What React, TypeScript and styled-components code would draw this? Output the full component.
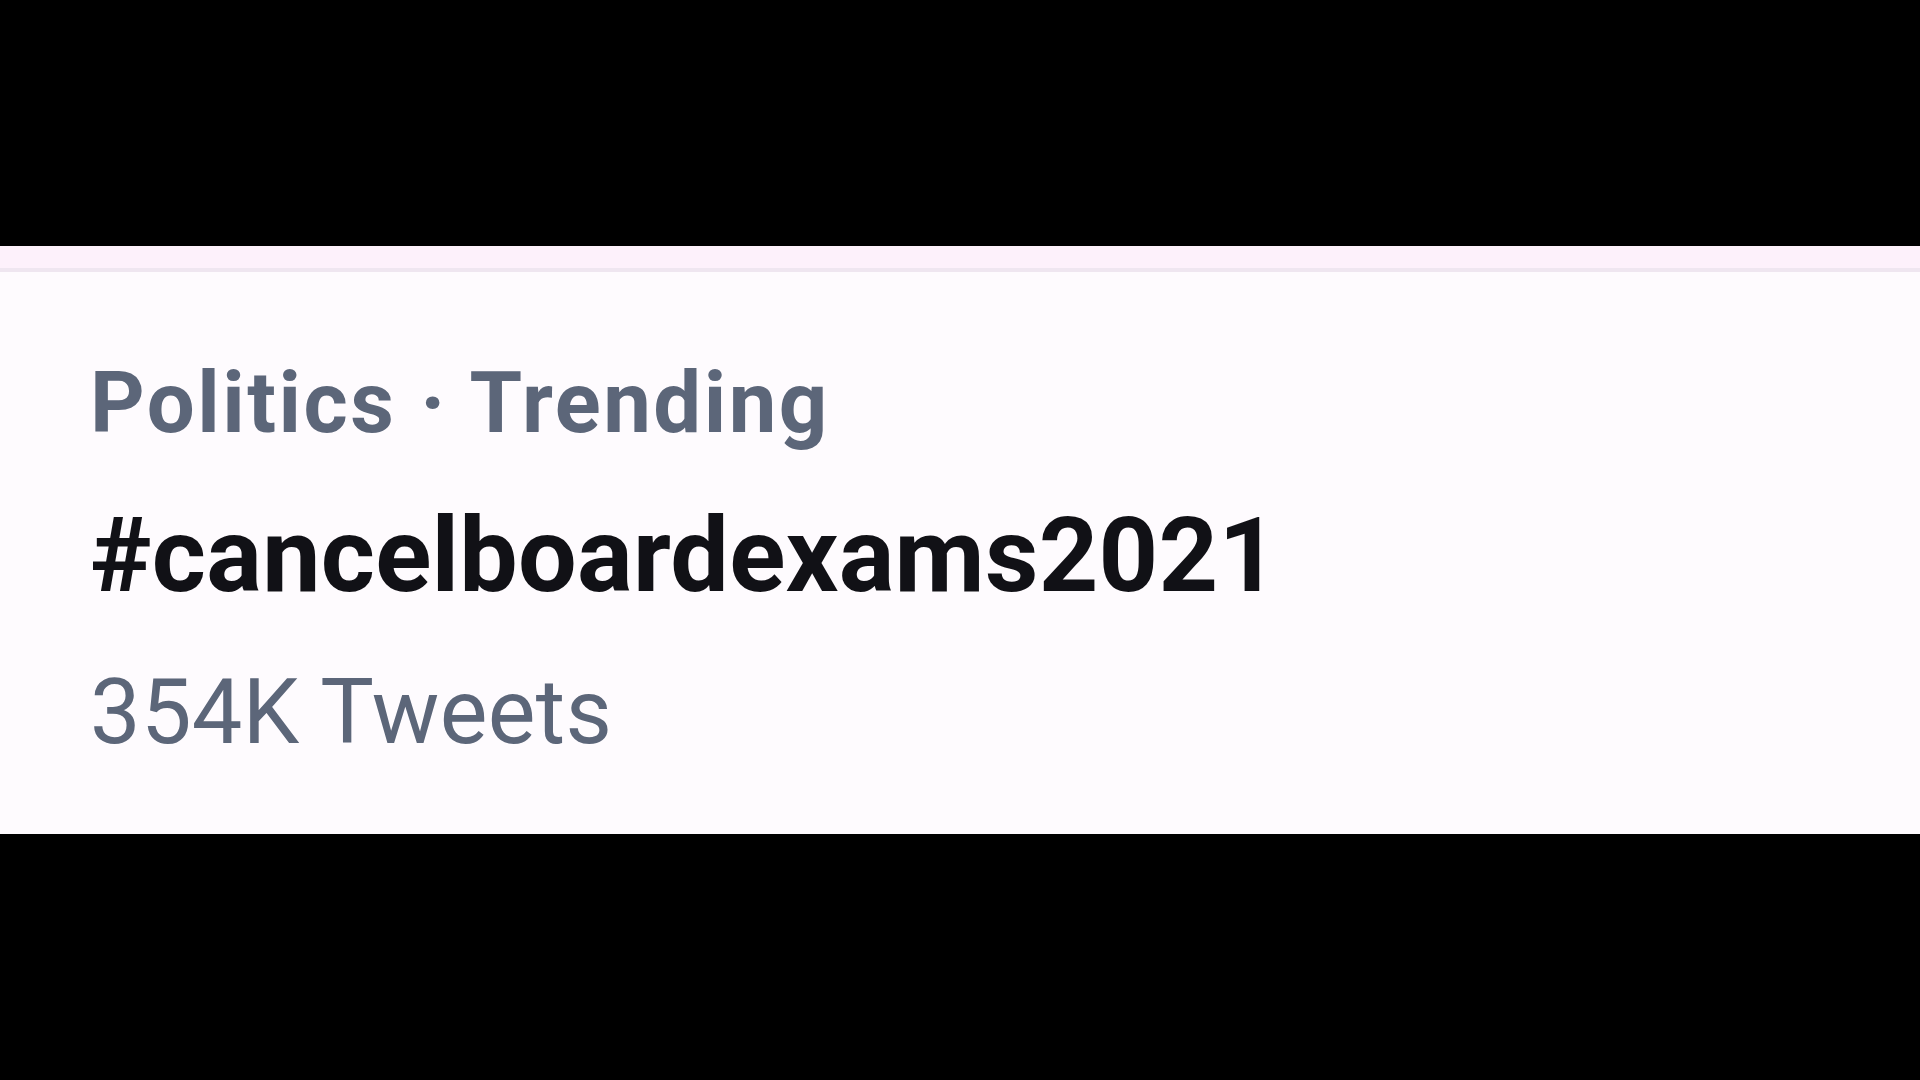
import React from "react";
import styled, { createGlobalStyle } from "styled-components";

const Global = createGlobalStyle`
  html, body { margin: 0; padding: 0; background: #000; }
  body { font-family: Roboto, "Noto Sans", "Liberation Sans", sans-serif; }
`;

const Page = styled.div`
  width: 1920px;
  height: 1080px;
  background: #000;
  display: flex;
  flex-direction: column;
  padding-top: 246px;
  box-sizing: border-box;
`;

const Card = styled.section`
  background: #fefbfe;
  height: 588px;
  display: flex;
  flex-direction: column;
`;

const TopStrip = styled.div`
  height: 22px;
  background: #fdf1fb;
  border-bottom: 4px solid #efe6f0;
`;

const Trend = styled.div`
  display: flex;
  flex-direction: column;
  padding: 81px 0 0 90px;
`;

const Meta = styled.div`
  font-size: 85px;
  line-height: 100px;
  font-weight: 700;
  color: #5c6679;
  letter-spacing: 2.5px;
  white-space: nowrap;
`;

const Hashtag = styled.div`
  margin-top: 43px;
  font-size: 104px;
  line-height: 120px;
  font-weight: 700;
  color: #111116;
  letter-spacing: 0.25px;
  white-space: nowrap;
`;

const Count = styled.div`
  margin-top: 42px;
  font-size: 90px;
  line-height: 110px;
  font-weight: 400;
  color: #5c6679;
  letter-spacing: 0.3px;
  white-space: nowrap;
`;

export default function App() {
  return (
    <>
      <Global />
      <Page>
        <Card>
          <TopStrip />
          <Trend>
            <Meta>Politics · Trending</Meta>
            <Hashtag>#cancelboardexams2021</Hashtag>
            <Count>354K Tweets</Count>
          </Trend>
        </Card>
      </Page>
    </>
  );
}
